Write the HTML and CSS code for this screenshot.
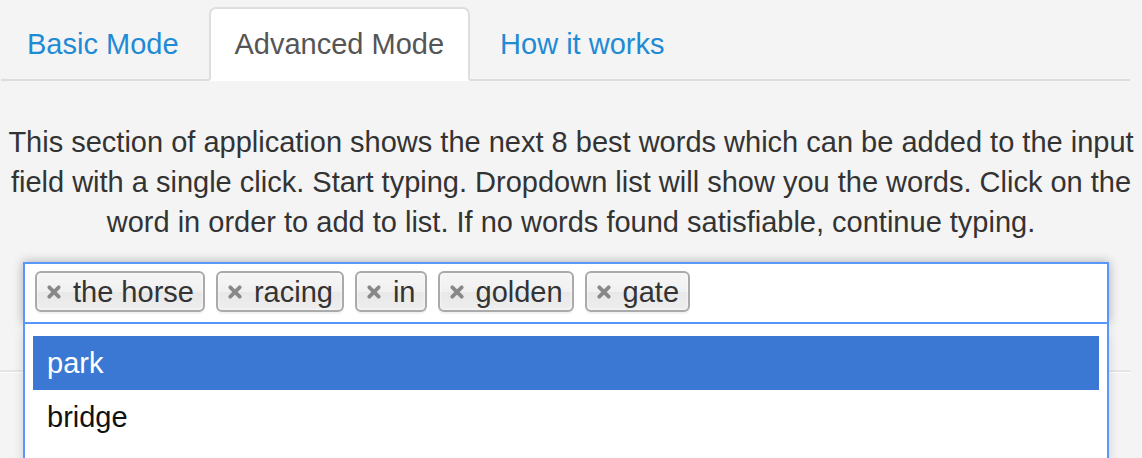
FILE: index.html
```html
<!DOCTYPE html>
<html>
<head>
<meta charset="utf-8">
<link rel="stylesheet" href="styles.css">
</head>
<body>
<div class="page">
  <ul class="tabs">
    <li class="tab"><a class="tab-link" href="#">Basic Mode</a></li>
    <li class="tab active"><a class="tab-link" href="#">Advanced Mode</a></li>
    <li class="tab"><a class="tab-link" href="#">How it works</a></li>
  </ul>
  <p class="intro">This section of application shows the next 8 best words which can be added to the input field with a single click. Start typing. Dropdown list will show you the words. Click on the word in order to add to list. If no words found satisfiable, continue typing.</p>
  <div class="chosen">
    <ul class="choices">
      <li class="choice"><svg class="close" viewBox="0 0 12 12"><path d="M2 2L10 10M10 2L2 10"/></svg><span>the horse</span></li>
      <li class="choice"><svg class="close" viewBox="0 0 12 12"><path d="M2 2L10 10M10 2L2 10"/></svg><span>racing</span></li>
      <li class="choice"><svg class="close" viewBox="0 0 12 12"><path d="M2 2L10 10M10 2L2 10"/></svg><span>in</span></li>
      <li class="choice"><svg class="close" viewBox="0 0 12 12"><path d="M2 2L10 10M10 2L2 10"/></svg><span>golden</span></li>
      <li class="choice"><svg class="close" viewBox="0 0 12 12"><path d="M2 2L10 10M10 2L2 10"/></svg><span>gate</span></li>
    </ul>
    <div class="drop">
      <ul class="results">
        <li class="result highlighted">park</li>
        <li class="result">bridge</li>
      </ul>
    </div>
  </div>
  <div class="rule"></div>
</div>
</body>
</html>
```
FILE: styles.css
```css
html, body {
  margin: 0;
  padding: 0;
  background: #f4f4f4;
}
body {
  font-family: "Liberation Sans", Arial, Helvetica, sans-serif;
  font-size: 29px;
  line-height: 40px;
  color: #333;
}
.page {
  width: 1142px;
  height: 458px;
  overflow: hidden;
  padding-top: 7px;
  box-sizing: border-box;
}
.tabs {
  list-style: none;
  margin: 0 0 0 1px;
  padding: 0;
  display: flex;
  border-bottom: 2px solid #dddddd;
  width: 1129px;
}
.tab {
  margin-bottom: -2px;
  margin-right: 4px;
}
.tab-link {
  display: block;
  padding: 15px 24px;
  border: 2px solid transparent;
  border-radius: 7px 7px 0 0;
  color: #1f8bd4;
  text-decoration: none;
}
.tab.active .tab-link {
  background: #fff;
  border-color: #dedede;
  border-bottom-color: transparent;
  color: #555;
}
.intro {
  margin: 41px 0 20px;
  padding: 0;
  text-align: center;
}
.chosen {
  position: relative;
  margin-left: 23px;
  width: 1086px;
}
.choices {
  list-style: none;
  margin: 0;
  padding: 7px 10px 10px;
  display: flex;
  gap: 11px;
  background: #fff;
  border: 2px solid #5897fb;
  box-shadow: 0 0 10px rgba(0, 0, 0, 0.3);
}
.choice {
  display: flex;
  align-items: center;
  height: 37px;
  padding: 0 9px 0 10px;
  border: 2px solid #aaaaaa;
  border-radius: 6px;
  background: linear-gradient(#f4f4f4 20%, #f0f0f0 50%, #e8e8e8 52%, #eeeeee);
  box-shadow: inset 0 0 3px #fff, 0 2px 0 rgba(0, 0, 0, 0.05);
  color: #333;
}
.close {
  width: 14px;
  height: 14px;
  margin-right: 12px;
  margin-left: 0;
  stroke: #888;
  stroke-width: 3.2;
  stroke-linecap: round;
  fill: none;
}
.drop {
  position: absolute;
  top: 100%;
  left: 0;
  right: 0;
  background: #fff;
  border: 2px solid #5897fb;
  border-top: 0;
  box-shadow: 0 8px 10px rgba(0, 0, 0, 0.15);
  padding: 12px 8px 60px;
}
.results {
  list-style: none;
  margin: 0;
  padding: 0;
}
.result {
  height: 54px;
  line-height: 54px;
  padding-left: 14px;
  color: #111;
}
.result.highlighted {
  background: #3b78d4;
  color: #fff;
}
.rule {
  width: 1131px;
  margin-top: 46px;
  border-top: 2px solid #e6e6e6;
  border-bottom: 1px solid #fff;
}
```
